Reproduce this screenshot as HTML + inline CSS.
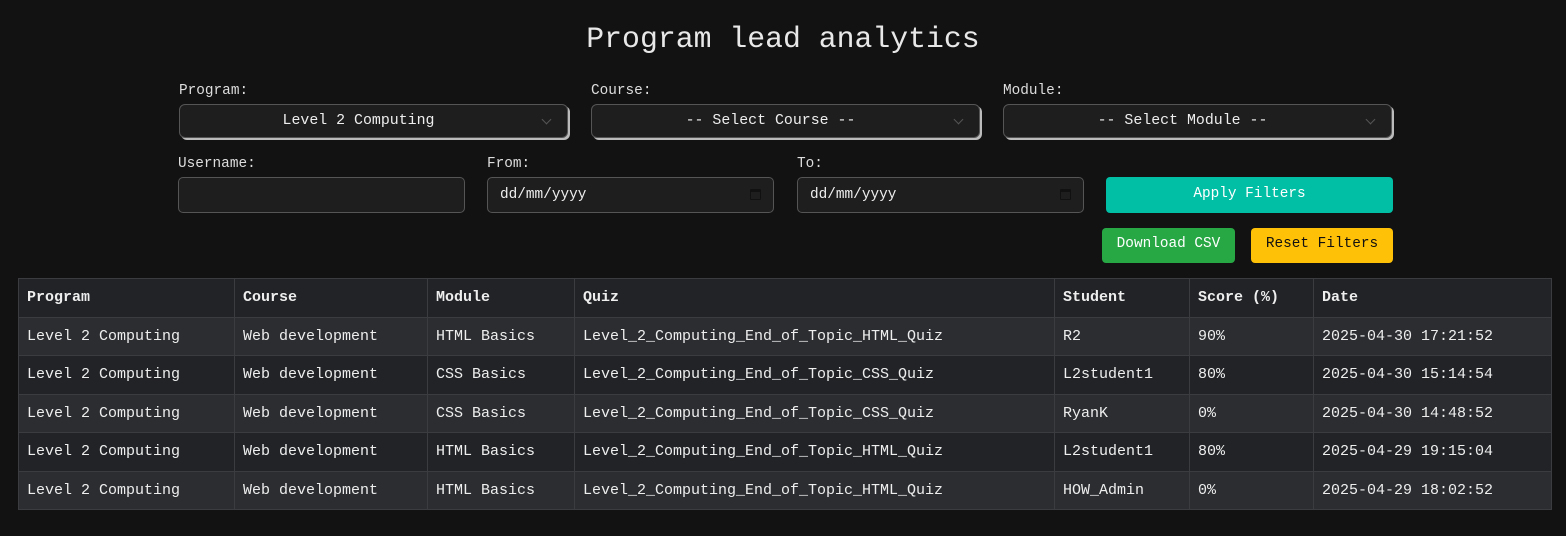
<!DOCTYPE html>
<html><head><style>
body{margin:0;background:#121212;width:1566px;height:536px;overflow:hidden;font-family:"Liberation Mono",monospace;color:#eee;position:relative}
.a{position:absolute}
h1{position:absolute;top:22px;left:0;width:1566px;text-align:center;margin:0;font-weight:normal;font-size:29.8px;color:#e8e8e8}
.lbl{font-size:14.4px;color:#ddd}
.sel{height:34px;background:#1e1e1e;border:1px solid #555;border-radius:6px;box-shadow:2px 2px 0 #bbb;font-size:14.9px;text-align:center;line-height:32px;color:#eee;box-sizing:border-box;padding-right:30px}
.sel:after{content:"";position:absolute;right:17px;top:11px;width:6px;height:6px;border-right:1px solid #555;border-bottom:1px solid #555;transform:rotate(45deg)}
.inp{height:36px;background:#1e1e1e;border:1px solid #555;border-radius:5px;box-sizing:border-box;font-size:14.4px;line-height:34px;padding-left:12px}
.cal{position:absolute;right:12px;top:11px;width:11px;height:11px;border:1.5px solid #111;border-top-width:3px;box-sizing:border-box;border-radius:1px}
.btn{border-radius:4px;text-align:center;font-size:14.4px}
table{position:absolute;left:18px;top:278px;width:1534px;border-collapse:collapse;font-size:15px}
td,th{border:1px solid #3a3c40;padding:0 8px;text-align:left;height:37.5px;white-space:nowrap}
th{background:#212327;font-weight:bold}
tr:nth-child(even) td{background:#2b2d31}
tr:nth-child(odd) td{background:#212327}
</style></head><body>
<h1>Program lead analytics</h1>
<div class="a lbl" style="left:179px;top:83px">Program:</div>
<div class="a lbl" style="left:591px;top:83px">Course:</div>
<div class="a lbl" style="left:1003px;top:83px">Module:</div>
<div class="a sel" style="left:179px;top:104px;width:389px">Level 2 Computing</div>
<div class="a sel" style="left:591px;top:104px;width:389px">-- Select Course --</div>
<div class="a sel" style="left:1003px;top:104px;width:389px">-- Select Module --</div>
<div class="a lbl" style="left:178px;top:156px">Username:</div>
<div class="a lbl" style="left:487px;top:156px">From:</div>
<div class="a lbl" style="left:797px;top:156px">To:</div>
<div class="a inp" style="left:178px;top:177px;width:287px"></div>
<div class="a inp" style="left:487px;top:177px;width:287px">dd/mm/yyyy<span class="cal"></span></div>
<div class="a inp" style="left:797px;top:177px;width:287px">dd/mm/yyyy<span class="cal"></span></div>
<div class="a btn" style="left:1106px;top:177px;width:287px;height:36px;line-height:34px;background:#00bfa5;color:#fff">Apply Filters</div>
<div class="a btn" style="left:1102px;top:228px;width:133px;height:35px;line-height:32px;background:#28a745;color:#fff">Download CSV</div>
<div class="a btn" style="left:1251px;top:228px;width:142px;height:35px;line-height:32px;background:#ffc107;color:#111">Reset Filters</div>
<table>
<colgroup><col style="width:216px"><col style="width:193px"><col style="width:147px"><col style="width:480px"><col style="width:135px"><col style="width:124px"><col></colgroup>
<tr><th>Program</th><th>Course</th><th>Module</th><th>Quiz</th><th>Student</th><th>Score (%)</th><th>Date</th></tr>
<tr><td>Level 2 Computing</td><td>Web development</td><td>HTML Basics</td><td>Level_2_Computing_End_of_Topic_HTML_Quiz</td><td>R2</td><td>90%</td><td>2025-04-30 17:21:52</td></tr>
<tr><td>Level 2 Computing</td><td>Web development</td><td>CSS Basics</td><td>Level_2_Computing_End_of_Topic_CSS_Quiz</td><td>L2student1</td><td>80%</td><td>2025-04-30 15:14:54</td></tr>
<tr><td>Level 2 Computing</td><td>Web development</td><td>CSS Basics</td><td>Level_2_Computing_End_of_Topic_CSS_Quiz</td><td>RyanK</td><td>0%</td><td>2025-04-30 14:48:52</td></tr>
<tr><td>Level 2 Computing</td><td>Web development</td><td>HTML Basics</td><td>Level_2_Computing_End_of_Topic_HTML_Quiz</td><td>L2student1</td><td>80%</td><td>2025-04-29 19:15:04</td></tr>
<tr><td>Level 2 Computing</td><td>Web development</td><td>HTML Basics</td><td>Level_2_Computing_End_of_Topic_HTML_Quiz</td><td>HOW_Admin</td><td>0%</td><td>2025-04-29 18:02:52</td></tr>
</table>
</body></html>
